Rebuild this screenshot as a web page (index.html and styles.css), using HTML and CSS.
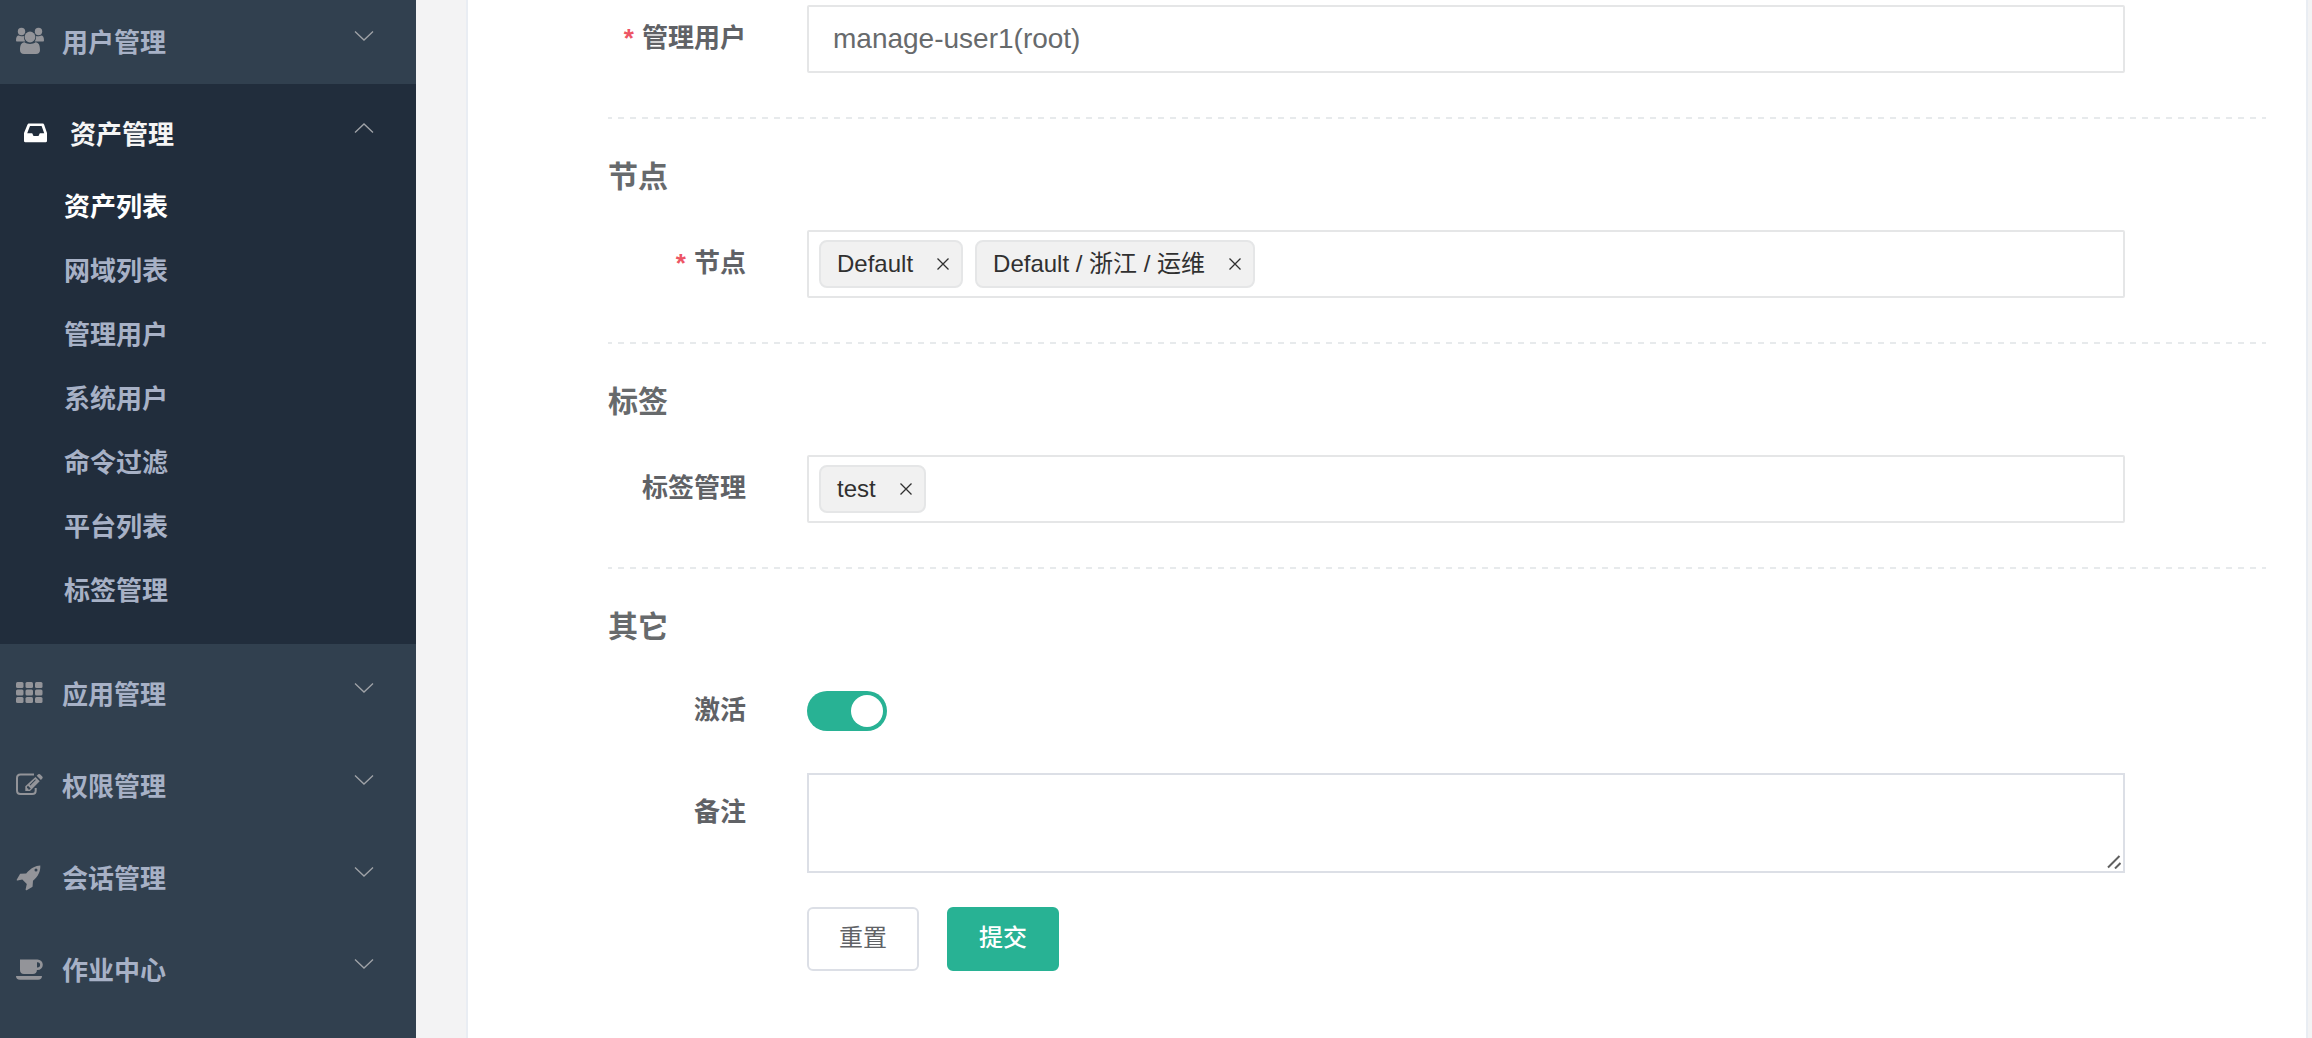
FILE: index.html
```html
<!DOCTYPE html>
<html lang="zh-CN">
<head>
<meta charset="utf-8">
<title>资产管理</title>
<link rel="stylesheet" href="styles.css">
</head>
<body>
<svg class="defs" aria-hidden="true">
  <symbol id="down" viewBox="0 0 20 12"><path d="M1 1.5l9 8.5 9-8.5"/></symbol>
  <symbol id="up" viewBox="0 0 20 12"><path d="M1 10.500l9-8.500 9 8.500"/></symbol>
  <symbol id="close" viewBox="0 0 12 12"><path d="M.5.5l11 11M11.500.5l-11 11"/></symbol>
</svg>
<div class="app">
  <nav class="sidebar">
    <button class="menu" type="button">
      <svg class="icon" viewBox="0 0 28 28"><circle cx="5.500" cy="4.500" r="3.700"/><circle cx="22.500" cy="4.500" r="3.700"/><path d="M0 13.500C0 10 1 8.500 2.800 8.500c1 .8 3.800 1.200 5.200.4-.3 2.300.2 4 1.400 5.600H2.200C.8 14.500 0 14.500 0 13.500zM28 13.500c0-3.500-1-5-2.800-5-1 .8-3.800 1.200-5.200.4.300 2.300-.2 4-1.400 5.600h7.200c1.400 0 2.200 0 2.200-1z"/><circle cx="14" cy="10" r="5.400"/><path d="M8.500 15.300c2.700 2.300 8.300 2.300 11 0C23 15.300 24 19 24 23c0 2.700-1.500 4-4 4H8c-2.500 0-4-1.300-4-4 0-4 1-7.700 4.500-7.700z"/></svg>
      <span>用户管理</span>
      <svg class="arrow"><use href="#down"/></svg>
    </button>
    <section class="group">
      <button class="menu menu-open" type="button" aria-expanded="true">
        <svg class="icon icon-small" viewBox="0 0 24 28"><path fill-rule="evenodd" d="M5.200 4.500h13.400c.8 0 1.200.4 1.500 1.100L23 14v8c0 .7-.4 1.200-1.200 1.200H1.200C.4 23.200 0 22.700 0 22v-8l3.500-8.400c.3-.7.800-1.100 1.700-1.100zM6 7L3.200 14.300h5L9.500 17h5l1.300-2.700h4.400L17.600 7z"/></svg>
        <span>资产管理</span>
        <svg class="arrow"><use href="#up"/></svg>
      </button>
      <ul class="submenu">
        <li><a class="active" href="#">资产列表</a></li>
        <li><a href="#">网域列表</a></li>
        <li><a href="#">管理用户</a></li>
        <li><a href="#">系统用户</a></li>
        <li><a href="#">命令过滤</a></li>
        <li><a href="#">平台列表</a></li>
        <li><a href="#">标签管理</a></li>
      </ul>
    </section>
    <button class="menu" type="button">
      <svg class="icon" viewBox="0 0 28 28"><g><rect x="0" y="3" width="7.500" height="6" rx="1.500"/><rect x="9.500" y="3" width="7.500" height="6" rx="1.500"/><rect x="19" y="3" width="7.500" height="6" rx="1.500"/><rect x="0" y="10.500" width="7.500" height="6" rx="1.500"/><rect x="9.500" y="10.500" width="7.500" height="6" rx="1.500"/><rect x="19" y="10.500" width="7.500" height="6" rx="1.500"/><rect x="0" y="18" width="7.500" height="6" rx="1.500"/><rect x="9.500" y="18" width="7.500" height="6" rx="1.500"/><rect x="19" y="18" width="7.500" height="6" rx="1.500"/></g></svg>
      <span>应用管理</span>
      <svg class="arrow"><use href="#down"/></svg>
    </button>
    <button class="menu" type="button">
      <svg class="icon" viewBox="0 0 28 28"><path class="line" d="M18 3.500H4.500Q1 3.500 1 7v12.500Q1 23 4.500 23h11.700q3.500 0 3.500-3.500V17"/><path fill-rule="evenodd" d="M19.500 6l4.200 4.200L14 19.900H9.300v-4.700zM11 15.800v1.400h1.200v1.300h1.500l1-1-2.700-2.700zM19.200 8.300l-5.500 5.500.6.600 5.500-5.500zM20.700 4.800l1.500-1.500q.9-.8 1.800 0l2.300 2.300q.9.900 0 1.800L24.900 9z"/></svg>
      <span>权限管理</span>
      <svg class="arrow"><use href="#down"/></svg>
    </button>
    <button class="menu" type="button">
      <svg class="icon" viewBox="0 0 28 28"><path fill-rule="evenodd" d="M24.300 2.500c.2 6-1.800 10.500-7.300 15.300l-.4 5.500c0 .3-.1.500-.4.700l-5.500 3.200c-.6.300-1.200-.1-1.100-.7l1.200-5.600-4.500-4.500-4.800 1.200c-.6.100-1-.4-.7-1l3.200-5.500c.2-.3.400-.4.700-.4l5.500-.3C15 5 19.500 2.700 24.300 2.500zM20 5.400a1.500 1.500 0 100 3 1.500 1.500 0 000-3z"/></svg>
      <span>会话管理</span>
      <svg class="arrow"><use href="#down"/></svg>
    </button>
    <button class="menu" type="button">
      <svg class="icon" viewBox="0 0 28 28"><path fill-rule="evenodd" d="M4 4.500h17.500a5.300 5.300 0 010 10.600h-.6c0 2.500-1.500 4-4 4H8c-2.500 0-4-1.500-4-4zM21 7.200v5.200h.5a2.600 2.600 0 000-5.200zM0 21h26c0 2.400-1.300 3.800-4 3.800H4c-2.700 0-4-1.400-4-3.800z"/></svg>
      <span>作业中心</span>
      <svg class="arrow"><use href="#down"/></svg>
    </button>
  </nav>
  <main class="main">
    <form class="panel">
      <div class="row">
        <label class="required" for="admin">管理用户</label>
        <input class="box" id="admin" type="text" value="manage-user1(root)">
      </div>
      <hr>
      <h3>节点</h3>
      <div class="row">
        <label class="required" for="nodes">节点</label>
        <div class="box tags">
          <span class="tag">Default<button type="button" aria-label="移除"><svg><use href="#close"/></svg></button></span>
          <span class="tag">Default / 浙江 / 运维<button type="button" aria-label="移除"><svg><use href="#close"/></svg></button></span>
          <input id="nodes" type="text">
        </div>
      </div>
      <hr>
      <h3>标签</h3>
      <div class="row">
        <label for="labels">标签管理</label>
        <div class="box tags">
          <span class="tag">test<button type="button" aria-label="移除"><svg><use href="#close"/></svg></button></span>
          <input id="labels" type="text">
        </div>
      </div>
      <hr>
      <h3>其它</h3>
      <div class="row row-switch">
        <label for="active">激活</label>
        <input class="switch" id="active" type="checkbox" role="switch" checked>
      </div>
      <div class="row row-note">
        <label for="note">备注</label>
        <div class="note">
          <textarea id="note"></textarea>
          <svg class="grip" viewBox="0 0 14 14"><path d="M1 12.500L12.500 1M8 13.500L13.500 8"/></svg>
        </div>
      </div>
      <div class="actions">
        <button class="btn" type="reset">重置</button>
        <button class="btn btn-primary" type="submit">提交</button>
      </div>
    </form>
  </main>
</div>
</body>
</html>
```
FILE: styles.css
```css
* { box-sizing: border-box; }

html, body { height: 100%; }

body {
  margin: 0;
  overflow: hidden;
  background: #f3f3f4;
  color: #606266;
  font-family: "Liberation Sans", "Noto Sans CJK SC", sans-serif;
  font-size: 26px;
}

button, input, textarea { font: inherit; color: inherit; }

.defs { display: none; }

.app { display: flex; min-height: 100%; }

/* Sidebar */
.sidebar {
  flex: none;
  width: 416px;
  margin-top: -8px;
  background: #31404f;
  color: #a7b1c6;
  font-weight: 700;
}

.menu {
  display: flex;
  align-items: center;
  gap: 18px;
  width: 100%;
  height: 92px;
  padding: 6px 42px 0 16px;
  border: 0;
  background: none;
  text-align: left;
}

.menu span { flex: 1; padding-bottom: 1px; }

.menu-open { padding-left: 24px; color: #f5f5f5; }

.icon {
  flex: none;
  width: 28px;
  height: 28px;
  fill: #939499;
}

.icon-small { width: 24px; margin-right: 4px; fill: #fff; }

.icon .line { fill: none; stroke: #939499; stroke-width: 2; }

.arrow {
  flex: none;
  width: 20px;
  height: 12px;
  margin-bottom: 10px;
  fill: none;
  stroke: #a0a3a8;
  stroke-width: 1.3;
}

.group { background: #212d3c; }

.submenu { margin: 0; padding: 0 0 20px; list-style: none; }

.submenu a {
  display: block;
  padding: 0 0 2px 64px;
  line-height: 62px;
  color: inherit;
  text-decoration: none;
}

.submenu .active { color: #fff; }

/* Form panel */
.main { flex: 1; padding: 0 4px 0 50px; }

.panel {
  min-height: 100%;
  padding: 5px 40px 0 140px;
  border: solid #e9edf3;
  border-width: 0 2px;
  background: #fff;
}

.row {
  display: grid;
  grid-template-columns: 138px 1fr;
  column-gap: 61px;
  align-items: center;
  padding-right: 141px;
}

.row label {
  padding-bottom: 2px;
  font-weight: 700;
  line-height: 38px;
  text-align: right;
  white-space: nowrap;
}

.required::before { content: "*"; margin-right: 8px; color: #ed5565; }

hr {
  height: 2px;
  margin: 44px 0 0;
  border: 0;
  background: repeating-linear-gradient(90deg, #e7eaec 0 6px, transparent 6px 12px) -2px 0;
}

h3 {
  margin: 36px 0 31px;
  color: #676a6c;
  font-size: 30px;
  line-height: 44px;
}

.box {
  width: 100%;
  height: 68px;
  padding: 0 24px;
  border: 2px solid #e5e6e7;
  border-radius: 2px;
  background: #fff;
  color: #676a6c;
  font-size: 28px;
}

.tags { display: flex; align-items: center; gap: 12px; padding: 0 10px; }

.tags input { flex: 1; min-width: 0; border: 0; outline: 0; background: none; }

.tag {
  display: flex;
  align-items: center;
  gap: 14px;
  height: 48px;
  padding: 0 2px 0 16px;
  border: 2px solid #e5e6e7;
  border-radius: 8px;
  background: #f1f1f1;
  color: #303030;
  font-size: 24px;
  line-height: 24px;
  white-space: nowrap;
}

.tag button {
  display: grid;
  place-items: center;
  width: 32px;
  height: 32px;
  padding: 0;
  border: 0;
  background: none;
}

.tag svg { width: 12px; height: 12px; fill: none; stroke: #303030; stroke-width: 1.3; }

.row-switch { margin-top: 42px; }

.switch {
  width: 80px;
  height: 40px;
  margin: 0;
  padding: 4px;
  border-radius: 20px;
  background: #28b294;
  appearance: none;
}

.switch::before {
  content: "";
  display: block;
  width: 32px;
  height: 32px;
  border-radius: 50%;
  background: #fff;
}

.switch:checked::before { margin-left: auto; }

.row-note { align-items: start; margin-top: 42px; }

.row-note label { padding-top: 20px; }

.note { display: grid; position: relative; }

textarea {
  width: 100%;
  height: 100px;
  padding: 10px 30px;
  border: 2px solid #dcdfe6;
  background: #fff;
  resize: none;
}

.grip {
  position: absolute;
  right: 4px;
  bottom: 4px;
  width: 14px;
  height: 14px;
  fill: none;
  stroke: #606060;
  stroke-width: 2;
}

.actions { display: flex; gap: 28px; padding: 34px 0 66px 199px; }

.btn {
  width: 112px;
  height: 64px;
  padding: 0 0 2px;
  border: 2px solid #dcdfe6;
  border-radius: 6px;
  background: #fff;
  font-size: 24px;
  line-height: 24px;
}

.btn-primary {
  border-color: #28b294;
  background: #28b294;
  color: #fff;
  font-weight: 500;
}
```
